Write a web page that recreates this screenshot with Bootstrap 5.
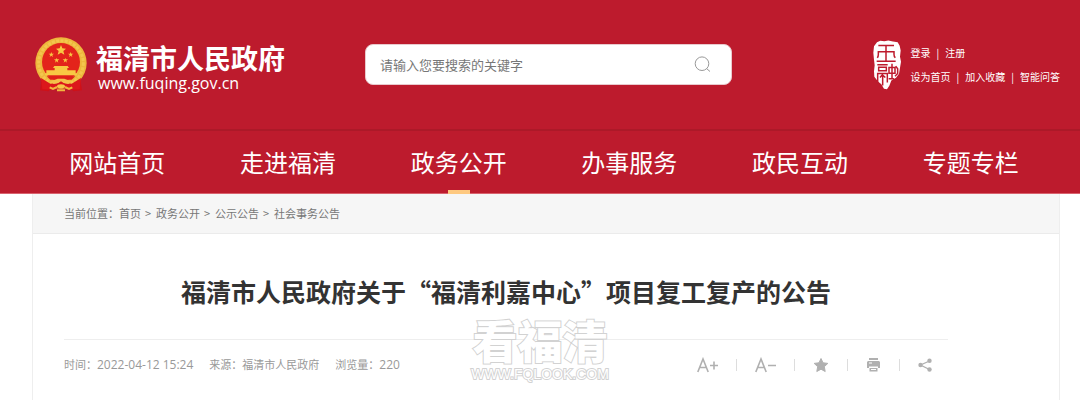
<!DOCTYPE html>
<html lang="zh-CN">
<head>
<meta charset="utf-8">
<meta name="viewport" content="width=device-width, initial-scale=1">
<title>福清市人民政府</title>
<link href="https://cdn.jsdelivr.net/npm/bootstrap@5.3.0/dist/css/bootstrap.min.css" rel="stylesheet">
<style>
body { font-family: "Noto Sans CJK SC", sans-serif; color: #333; background: #fff; overflow-x: hidden; }
.latin { font-family: "Open Sans", "Noto Sans CJK SC", sans-serif; }
.site-head { background: #bd1b2d; border-bottom: 1px solid #d9626e; color: #fff; }
.head-top { padding: 0 20px 0 34px; min-height: 131px; border-bottom: 2px solid #ac1928; }
.brand { flex: 0 0 331px; gap: 8px; color: #fff; }
.brand-text { padding-top: 8px; }
.brand-name { font-size: 27px; font-weight: 700; line-height: 28px; }
.brand-url { font-size: 16px; line-height: 22px; padding-left: 2px; }
.search-box { height: 41px; border-radius: 8px; background: #fff; border: 1px solid #e9c9cd; }
.search-box input { font-size: 13px; padding: 0 14px; color: #555; background: transparent; }
.search-box input::placeholder { color: #777; opacity: 1; }
.search-box button { padding: 0 20px; line-height: 0; }
.quick { margin-left: 141px; gap: 10px; font-size: 10px; line-height: 24px; }
.quick a, .main-nav a { color: #fff; }
.quick-row { gap: 6px; white-space: nowrap; }
.main-nav { padding: 0 24px 0 32px; }
.main-nav a { font-size: 24px; line-height: 62px; padding: 0; position: relative; }
.main-nav a.active::after { content: ""; position: absolute; left: 50%; bottom: -1px; width: 22px; height: 4px; margin-left: -11px; background: #fec980; }
.page-box { margin: 0 20px 0 32px; border: solid #eee; border-width: 0 1px; min-height: 206px; }
.crumbs { background: #f6f6f6; border-bottom: 1px solid #ebebeb; padding: 0 31px; font-size: 11px; line-height: 39px; color: #777; }
.crumbs a { color: #777; }
.crumbs ol { gap: 4px; }
.crumbs li { min-width: 7px; }
.article { padding: 0 111px 0 31px; }
.article h1 { font-size: 25px; font-weight: 700; line-height: 40px; padding: 37px 0 28px; }
.meta-row { border-top: 1px solid #eee; min-height: 50px; padding-right: 16px; }
.meta { gap: 16px; font-size: 11px; color: #999; }
.meta .latin { font-size: 12px; }
.tools { gap: 18px; color: #b0b0b0; }
.tools button { color: #b0b0b0; line-height: 0; }
.sep { width: 1px; height: 12px; background: #ddd; }
.stamp { position: absolute; left: 50%; top: 82px; width: 136px; margin-left: -74px; color: #fff; pointer-events: none; -webkit-text-stroke: 2px #d2d2d2; paint-order: stroke fill; }
.stamp-name { font-size: 45px; font-weight: 900; line-height: 48px; }
.stamp-url { font-size: 14px; line-height: 20px; font-family: "Liberation Sans", sans-serif; }
</style>
</head>
<body>
<header class="site-head">
  <div class="head-top d-flex align-items-center">
    <a class="brand d-flex align-items-center text-decoration-none" href="#">
      <svg width="54" height="57" viewBox="19 20 162 171" aria-hidden="true">
        <path d="M44 138 L37 183 L62 186 L76 174 L124 174 L138 186 L163 183 L156 138Z" fill="#cf1118"/>
        <circle cx="100" cy="101" r="77" fill="#eeb73c"/>
        <circle cx="100" cy="101" r="67" fill="none" stroke="#f3c64e" stroke-width="9" stroke-dasharray="9 4"/>
        <circle cx="100" cy="98" r="57" fill="#e3241b"/>
        <path d="M100 47l4 10 11 1-8 7 3 11-10-6-10 6 3-11-8-7 11-1z" fill="#f8c843"/>
        <g fill="#f8c843"><path d="M71 68l2 5 6 0-5 4 2 6-5-4-5 4 2-6-5-4 6 0z"/><path d="M129 68l2 5 6 0-5 4 2 6-5-4-5 4 2-6-5-4 6 0z"/><path d="M87 86l2 4 6 0-5 4 2 6-5-4-5 4 2-6-5-4 6 0z"/><path d="M113 86l2 4 6 0-5 4 2 6-5-4-5 4 2-6-5-4 6 0z"/>
        <path d="M80 110h40l4 6h-5v7h25v9h4v6H52v-6h4v-9h25v-7h-5z"/></g>
        <path d="M57 141h86l-11 10H68z" fill="#df2019"/>
        <path d="M40 146l28 17 20-1 12-8 12 8 20 1 28-17-4 34-32 1-16-6-16 0-16 6-32-1z" fill="#dc171b"/>
        <path d="M70 156l20-8h20l20 8-8 8-14-3-8-5-8 5-14 3z" fill="#f4c14b"/>
        <path d="M66 174l10 5 12-6M134 174l-10 5-12-6M88 183h24" stroke="#f1b83e" stroke-width="6" fill="none"/>
        <ellipse cx="100" cy="171" rx="12" ry="6" fill="#f5c748"/>
      </svg>
      <span class="brand-text d-flex flex-column">
        <span class="brand-name">福清市人民政府</span>
        <span class="brand-url latin">www.fuqing.gov.cn</span>
      </span>
    </a>
    <form class="search-box d-flex align-items-center flex-grow-1" role="search">
      <input class="flex-grow-1 border-0 w-100" type="text" aria-label="搜索" placeholder="请输入您要搜索的关键字">
      <button class="btn border-0" type="button" aria-label="搜索">
        <svg width="17" height="17" viewBox="0 0 17 17" fill="none" stroke="#999"><circle cx="8" cy="7.700" r="6.800"/><path d="M12.500 12.500l3.500 3"/></svg>
      </button>
    </form>
    <div class="quick d-flex align-items-center">
      <svg width="28" height="50" viewBox="66 39 84 149" aria-hidden="true">
        <path d="M78 45l10-4 12 1 12-2 14 3 14 2 6 11 3 14-2 19 3 15-3 18-3 18-9 12-14 8-6 16-7 10-9-1-8-14-10-8-11-14-1-17 2-18-2-16-2-21 2-20z" fill="#fff"/>
        <g fill="none" stroke="#bd1b2d" stroke-width="4.500">
          <path d="M82 55h47M105 55v46M77 102h57M79 92q3-4 3-10V74h47v8q0 6 4 10"/>
          <path d="M79 113h31M83 120h23v11H83zM80 168V139h29v27M87 151l7-8 9 8M95 142v33M114 121h18v17h-18zM123 110v45M113 155h14l6 8M134 117l6 8v14l-8 8"/>
        </g>
      </svg>
      <div>
        <div class="quick-row d-flex"><a class="text-decoration-none" href="#">登录</a><span>|</span><a class="text-decoration-none" href="#">注册</a></div>
        <div class="quick-row d-flex"><a class="text-decoration-none" href="#">设为首页</a><span>|</span><a class="text-decoration-none" href="#">加入收藏</a><span>|</span><a class="text-decoration-none" href="#">智能问答</a></div>
      </div>
    </div>
  </div>
  <nav class="main-nav nav nav-fill row-cols-6" aria-label="主导航">
    <a class="nav-link col" href="#">网站首页</a>
    <a class="nav-link col" href="#">走进福清</a>
    <a class="nav-link col active" aria-current="page" href="#">政务公开</a>
    <a class="nav-link col" href="#">办事服务</a>
    <a class="nav-link col" href="#">政民互动</a>
    <a class="nav-link col" href="#">专题专栏</a>
  </nav>
</header>
<main class="page-box">
  <nav class="crumbs d-flex" aria-label="当前位置">
    <span>当前位置：</span>
    <ol class="d-flex list-unstyled mb-0">
      <li><a class="text-decoration-none" href="#">首页</a></li><li>&gt;</li>
      <li><a class="text-decoration-none" href="#">政务公开</a></li><li>&gt;</li>
      <li><a class="text-decoration-none" href="#">公示公告</a></li><li>&gt;</li>
      <li><a class="text-decoration-none" href="#">社会事务公告</a></li>
    </ol>
  </nav>
  <article class="article position-relative">
    <h1 class="text-center mb-0">福清市人民政府关于“福清利嘉中心”项目复工复产的公告</h1>
    <div class="meta-row d-flex align-items-center justify-content-between">
      <div class="meta d-flex align-items-center">
        <span>时间：<span class="latin">2022-04-12 15:24</span></span>
        <span>来源：福清市人民政府</span>
        <span>浏览量：<span class="latin">220</span></span>
      </div>
      <div class="tools d-flex align-items-center">
        <button class="btn border-0 p-0" type="button" aria-label="放大字号"><svg width="21" height="16" viewBox="0 0 21 16" fill="none" stroke="currentColor" stroke-width="1.600"><path d="M.8 15L6 2l5.200 13M2.500 10.500h7M13 8.500h8M17 4.500v8"/></svg></button>
        <span class="sep"></span>
        <button class="btn border-0 p-0" type="button" aria-label="缩小字号"><svg width="21" height="16" viewBox="0 0 21 16" fill="none" stroke="currentColor" stroke-width="1.600"><path d="M.8 15L6 2l5.200 13M2.500 10.500h7M13 8.500h8"/></svg></button>
        <span class="sep"></span>
        <button class="btn border-0 p-0" type="button" aria-label="收藏"><svg width="16" height="16" viewBox="0 0 16 16" fill="currentColor" stroke="currentColor" stroke-linejoin="round"><path d="M8 1.500l2 4.300 4.800.6-3.500 3.300.9 4.800L8 12.200l-4.200 2.300.9-4.800L1.200 6.400 6 5.800z"/></svg></button>
        <span class="sep"></span>
        <button class="btn border-0 p-0" type="button" aria-label="打印"><svg width="15" height="16" viewBox="0 0 15 16" fill="currentColor"><path d="M3 1h9v2H3zM2 4h11l1 1v6h-2V9.500H3V11H1V5zM3.500 11h8v3.500h-8z"/><path d="M3 6h3M5 12.500h5" stroke="#fff"/></svg></button>
        <span class="sep"></span>
        <button class="btn border-0 p-0" type="button" aria-label="分享"><svg width="14" height="16" viewBox="0 0 14 16" fill="currentColor"><path d="M11.500 4L2.500 8l9 4.500" fill="none" stroke="currentColor" stroke-width="1.300"/><circle cx="11.500" cy="3.700" r="2.200"/><circle cx="2.500" cy="8" r="2.200"/><circle cx="11.500" cy="12.500" r="2.200"/></svg></button>
      </div>
    </div>
    <div class="stamp d-flex flex-column align-items-center text-nowrap">
      <div class="stamp-name">看福清</div>
      <div class="stamp-url">WWW.FQLOOK.COM</div>
    </div>
  </article>
</main>
<script src="https://cdn.jsdelivr.net/npm/bootstrap@5.3.0/dist/js/bootstrap.bundle.min.js"></script>
</body>
</html>
